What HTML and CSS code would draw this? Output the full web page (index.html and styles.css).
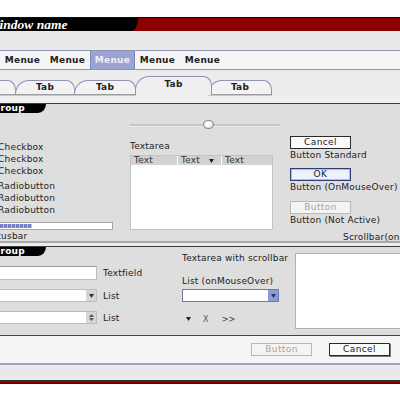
FILE: index.html
```html
<!DOCTYPE html>
<html lang="de">
<head>
  <meta charset="UTF-8">
  <title>Window name</title>
  <link rel="stylesheet" href="styles.css">
</head>
<body>
<div class="window">
  <div class="titlebar"><div class="title">Window name</div></div>
  <div class="band"></div>

  <div class="menubar">
    <span class="menu-item">Menue</span>
    <span class="menu-item">Menue</span>
    <span class="menu-item active">Menue</span>
    <span class="menu-item">Menue</span>
    <span class="menu-item">Menue</span>
  </div>

  <div class="tabs">
    <div class="tab">Tab</div>
    <div class="tab">Tab</div>
    <div class="tab">Tab</div>
    <div class="tab active">Tab</div>
    <div class="tab">Tab</div>
  </div>
  <div class="tab-gap"></div>

  <div class="group g1">
    <div class="group-label">Group</div>
    <div class="g1-body">
      <div class="col-left">
        <div class="check"><span class="box"></span>Checkbox</div>
        <div class="check"><span class="box"></span>Checkbox</div>
        <div class="check"><span class="box"></span>Checkbox</div>
        <div class="check radio-first"><span class="box round"></span>Radiobutton</div>
        <div class="check"><span class="box round"></span>Radiobutton</div>
        <div class="check"><span class="box round"></span>Radiobutton</div>
        <div class="progress"><div class="progress-fill"></div></div>
        <div class="caption">Statusbar</div>
      </div>
      <div class="col-mid">
        <div class="slider"><span class="knob"></span></div>
        <div class="caption label-top">Textarea</div>
        <div class="table">
          <div class="thead">
            <span class="th c1">Text</span>
            <span class="th c2">Text <svg class="arrow" width="5" height="4" viewBox="0 0 5 4"><path d="M0 0H5L2.5 4Z" fill="#222"/></svg></span>
            <span class="th c3">Text</span>
          </div>
        </div>
      </div>
      <div class="col-right">
        <div class="btn">Cancel</div>
        <div class="caption">Button Standard</div>
        <div class="btn hover">OK</div>
        <div class="caption">Button (OnMouseOver)</div>
        <div class="btn disabled">Button</div>
        <div class="caption">Button (Not Active)</div>
        <div class="caption scroll-note">Scrollbar(onMouseOver)</div>
      </div>
    </div>
  </div>
  <div class="group-gap"></div>

  <div class="group g2">
    <div class="col-left">
      <div class="group-label">Group</div>
      <div class="field-row first">
        <div class="textfield"></div>
        <span class="field-label">Textfield</span>
      </div>
      <div class="field-row">
        <div class="select">
          <span class="select-btn"><svg width="5" height="4" viewBox="0 0 5 4"><path d="M0 0H5L2.5 4Z" fill="#333"/></svg></span>
        </div>
        <span class="field-label">List</span>
      </div>
      <div class="field-row">
        <div class="select">
          <span class="select-btn spin">
            <svg width="5" height="3" viewBox="0 0 5 3"><path d="M0 3H5L2.5 0Z" fill="#555"/></svg>
            <svg width="5" height="3" viewBox="0 0 5 3"><path d="M0 0H5L2.5 3Z" fill="#555"/></svg>
          </span>
        </div>
        <span class="field-label">List</span>
      </div>
    </div>
    <div class="col-mid2">
      <div class="caption">Textarea with scrollbar</div>
      <div class="caption list-cap">List (onMouseOver)</div>
      <div class="select over">
        <span class="select-btn"><svg width="5" height="4" viewBox="0 0 5 4"><path d="M0 0H5L2.5 4Z" fill="#2a3470"/></svg></span>
      </div>
      <div class="icon-row">
        <svg width="5" height="4" viewBox="0 0 5 4"><path d="M0 0H5L2.5 4Z" fill="#222"/></svg>
        <span class="icon-x">X</span>
        <span class="icon-more">&gt;&gt;</span>
      </div>
    </div>
    <div class="col-right2">
      <div class="textarea"></div>
    </div>
  </div>

  <div class="footer">
    <div class="btn disabled">Button</div>
    <div class="btn">Cancel</div>
  </div>
  <div class="band bottom"></div>
  <div class="bottom-line"></div>
</div>
</body>
</html>
```

FILE: styles.css
```css
* { box-sizing: border-box; }
body {
  margin: 0;
  width: 400px;
  height: 400px;
  overflow: hidden;
  background: #fff;
  font-family: "DejaVu Sans", Verdana, sans-serif;
  font-size: 9px;
  letter-spacing: 0.2px;
  color: #222;
}
.window {
  width: 460px;
  margin: 17px 0 0 -30px;
}

/* title */
.titlebar {
  height: 14px;
  background: #8c0000;
  border-top: 1px solid #2a0000;
}
.title {
  width: 168px;
  height: 13px;
  padding-left: 18px;
  background: #000;
  border-bottom-right-radius: 7px 13px;
  color: #fff;
  font: italic bold 13.5px/13px "Liberation Serif", serif;
  letter-spacing: 0;
}
.band {
  height: 19px;
  background: #e9e9e9;
}
.band.bottom { height: 15px; }

/* menu */
.menubar {
  display: flex;
  height: 20px;
  padding-left: 30px;
  background: #f5f5f5;
  border-top: 1px solid #8e94b4;
  border-bottom: 1px solid #8e94b4;
}
.menu-item {
  width: 45px;
  text-align: center;
  font-weight: bold;
  line-height: 18px;
  letter-spacing: 0.3px;
}
.menu-item.active {
  background: #9ba3d3;
  color: #eef0ff;
  border-left: 1px solid #7d87bb;
  border-right: 1px solid #7d87bb;
}

/* tabs */
.tabs {
  display: flex;
  align-items: flex-end;
  height: 25px;
  background: #ececec;
}
.tab {
  width: 60px;
  height: 15px;
  margin-right: -1px;
  background: #f3f3f3;
  border: 1px solid #8e94b4;
  border-bottom: 1px solid #9c9c9c;
  border-radius: 14px 8px 0 0 / 14px 10px 0 0;
  box-shadow: 0 1px 0 #c8c8c8;
  text-align: center;
  font-weight: bold;
  line-height: 12px;
}
.tab:first-child { margin-left: -14px; }
.tab:nth-child(3) { width: 62px; }
.tab.active {
  position: relative;
  z-index: 1;
  width: 77px;
  height: 19px;
  margin-right: -4px;
  background: #efefef;
  border-bottom: none;
  box-shadow: none;
  line-height: 15px;
}
.tab:last-child { width: 64px; }
.tab-gap {
  height: 8px;
  background: #efefef;
}

/* groups */
.group {
  background: #dedede;
  border-top: 1px solid #3c3c3c;
}
.group-label {
  width: 61px;
  height: 9px;
  margin-left: 15px;
  padding-left: 8px;
  background: #000;
  color: #fff;
  font-weight: bold;
  line-height: 9px;
  border-bottom-right-radius: 8px 9px;
}
.g1 {
  height: 140px;
  border-bottom: 2px solid #a9a9a9;
}
.group-gap {
  height: 3px;
  background: #ededed;
}
.g1-body {
  display: grid;
  grid-template-columns: 148px 160px 1fr;
  padding-left: 12px;
}
.caption {
  line-height: 12px;
  white-space: nowrap;
}
.col-left { padding-top: 28px; }
.check {
  display: flex;
  align-items: center;
  height: 12px;
  padding-left: 3px;
}
.check.radio-first { margin-top: 3px; }
.box {
  width: 8px;
  height: 8px;
  margin-right: 5px;
  background: #fff;
  border: 1px solid #888;
}
.box.round { border-radius: 50%; }
.progress {
  width: 131px;
  height: 8px;
  margin-top: 6px;
  padding: 1px;
  background: #fff;
  border: 1px solid #a8a8a8;
}
.progress-fill {
  width: 48px;
  height: 100%;
  background: repeating-linear-gradient(90deg, #7683c6 0 3px, #b9c0e6 3px 4px);
}

.col-mid { padding-top: 4px; }
.slider {
  position: relative;
  width: 150px;
  height: 16px;
}
.slider::before {
  content: "";
  position: absolute;
  left: 0;
  right: 0;
  top: 7px;
  height: 2px;
  background: #c6c6c6;
  border-bottom: 1px solid #ececec;
}
.knob {
  position: absolute;
  left: 73px;
  top: 3px;
  width: 11px;
  height: 9px;
  border: 1px solid #8a8a8a;
  border-radius: 50%;
  background: radial-gradient(circle at 45% 35%, #fff 0 30%, #c8c8c8 90%);
}
.label-top { margin-top: 7px; }
.table {
  width: 143px;
  height: 75px;
  margin-top: 3px;
  background: #fff;
  border: 1px solid #c2c2c2;
}
.thead {
  display: flex;
  height: 9px;
  line-height: 9px;
}
.th {
  display: flex;
  align-items: center;
  padding-left: 3px;
  background: #d2d2d2;
  border-right: 1px solid #fff;
  color: #333;
}
.th.c1 { width: 47px; }
.th.c2 { width: 44px; }
.th.c3 { flex: 1; border-right: none; }
.arrow { margin-left: 9px; }

.col-right { padding-top: 23px; }
.btn {
  width: 61px;
  height: 13px;
  background: #fafafa;
  border: 1px solid #2a2a2a;
  text-align: center;
  line-height: 11px;
  letter-spacing: 0.4px;
}
.btn.hover {
  margin-top: 7px;
  background: #f0f2fb;
  border-color: #2f3d7c;
  box-shadow: inset 0 0 0 1px #b4bbdc;
}
.btn.disabled {
  margin-top: 8px;
  background: #f4f4f4;
  border-color: #b8b8b8;
  color: #a4a4a4;
}
.scroll-note {
  margin-top: 5px;
  padding-left: 53px;
}

/* second group */
.g2 {
  display: grid;
  grid-template-columns: 200px 113px 1fr;
  height: 90px;
  padding-left: 12px;
  border-bottom: 1px solid #444;
}
.g2 .col-left { padding-top: 0; }
.g2 .group-label { margin-left: 3px; }
.field-row {
  display: flex;
  align-items: center;
  margin-top: 9px;
}
.field-row.first { margin-top: 10px; }
.textfield {
  width: 115px;
  height: 14px;
  background: #fff;
  border: 1px solid #bdbdbd;
  border-top-color: #9a9a9a;
}
.field-label { margin-left: 6px; }
.select {
  display: flex;
  justify-content: flex-end;
  width: 115px;
  height: 13px;
  background: #fff;
  border: 1px solid #bdbdbd;
}
.select-btn {
  display: flex;
  align-items: center;
  justify-content: center;
  width: 10px;
  background: #d6d6d6;
}
.select-btn.spin {
  flex-direction: column;
  gap: 1px;
}
.col-mid2 { padding-top: 5px; }
.list-cap { margin-top: 11px; }
.select.over {
  width: 97px;
  margin-top: 2px;
  border-color: #6d79b6;
}
.select.over .select-btn { background: #8e9bd3; }
.icon-row {
  display: flex;
  align-items: center;
  height: 12px;
  margin-top: 11px;
  padding-left: 4px;
}
.icon-x {
  margin-left: 12px;
  color: #555;
  font-size: 8px;
}
.icon-more {
  margin-left: 13px;
  font-size: 8px;
  color: #333;
}
.col-right2 { padding-top: 6px; }
.textarea {
  height: 76px;
  background: #fff;
  border: 1px solid #b0b0b0;
}

/* footer */
.footer {
  display: flex;
  justify-content: flex-end;
  gap: 17px;
  height: 29px;
  padding: 7px 40px 0 0;
  background: #f5f5f5;
  border-bottom: 2px solid #a2a6ba;
}
.footer .btn { margin-top: 0; }
.footer .btn:last-child { box-shadow: 1px 1px 0 #777; }
.bottom-line {
  height: 4px;
  background: #8c0000;
  border-top: 1px solid #333;
  border-bottom: 1px solid #3a0000;
}
```
